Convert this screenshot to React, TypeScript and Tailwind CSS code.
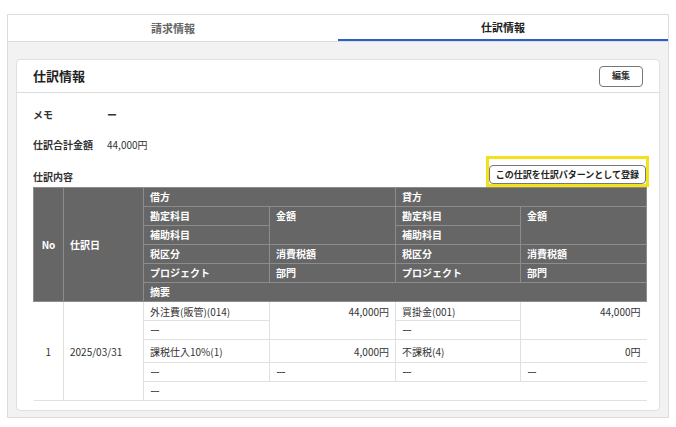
const th = 'bg-[#666666] text-white font-bold text-[10px] border border-[#8c8c8c] px-1.5 text-left align-top h-[19px] leading-[17px]'
const td = 'text-[10px] text-[#333] border-b border-[#e0e0e0] px-1.5 h-[19px] align-middle'

export default function App() {
  return (
    <div className="w-[676px] h-[427px] bg-white pt-[14px] px-[7px]" style={{ fontFamily: '"Noto Sans CJK JP", "Noto Sans", sans-serif' }}>
      <div className="border border-[#dcdcdc] bg-[#f2f2f2] h-[404px] flex flex-col">
        <div className="flex bg-white h-[27px] border-b border-[#dcdcdc]">
          <div className="flex-1 flex items-center justify-center text-[11px] text-[#666] font-bold">請求情報</div>
          <div className="flex-1 flex items-center justify-center text-[11px] text-[#222] font-bold border-b-2 border-[#2b5fc9]">仕訳情報</div>
        </div>
        <div className="mx-2 mt-[17px] bg-white border border-[#e0e0e0] rounded-sm h-[352px]">
          <div className="flex items-center justify-between h-[33px] px-4 border-b border-[#dcdcdc]">
            <div className="text-[13px] font-bold text-[#222]">仕訳情報</div>
            <button className="border border-[#777] rounded px-3 h-[21px] text-[9px] font-bold text-[#333]">編集</button>
          </div>
          <div className="px-4">
            <div className="flex items-center h-[18px] mt-[12px] text-[10px] text-[#333] font-bold">
              <span className="w-[74px]">メモ</span><span>ー</span>
            </div>
            <div className="flex items-center h-[18px] mt-[12px] text-[10px] text-[#333]">
              <span className="w-[74px] font-bold">仕訳合計金額</span><span>44,000円</span>
            </div>
            <div className="flex items-end justify-between mt-[6px] h-[28px]">
              <span className="text-[10px] font-bold text-[#333] mb-[3px]">仕訳内容</span>
              <div className="border-[3px] border-[#f2e21a] mr-[-6px]">
                <button className="border border-[#777] rounded bg-white px-1.5 h-[19px] text-[9px] font-bold text-[#222]">この仕訳を仕訳パターンとして登録</button>
              </div>
            </div>
            <table className="w-[613px] border-collapse table-fixed">
              <colgroup>
                <col className="w-[30px]" /><col className="w-[80px]" /><col className="w-[126px]" /><col className="w-[126px]" /><col className="w-[125px]" /><col className="w-[126px]" />
              </colgroup>
              <thead>
                <tr>
                  <th rowSpan={6} className={th + ' !align-middle !text-center'}>No</th>
                  <th rowSpan={6} className={th + ' !align-middle'}>仕訳日</th>
                  <th colSpan={2} className={th}>借方</th>
                  <th colSpan={2} className={th}>貸方</th>
                </tr>
                <tr><th className={th}>勘定科目</th><th rowSpan={2} className={th}>金額</th><th className={th}>勘定科目</th><th rowSpan={2} className={th}>金額</th></tr>
                <tr><th className={th}>補助科目</th><th className={th}>補助科目</th></tr>
                <tr><th className={th}>税区分</th><th className={th}>消費税額</th><th className={th}>税区分</th><th className={th}>消費税額</th></tr>
                <tr><th className={th}>プロジェクト</th><th className={th}>部門</th><th className={th}>プロジェクト</th><th className={th}>部門</th></tr>
                <tr><th colSpan={4} className={th}>摘要</th></tr>
              </thead>
              <tbody>
                <tr>
                  <td rowSpan={5} className={td + ' text-center border-r'}>1</td>
                  <td rowSpan={5} className={td + ' border-r'}>2025/03/31</td>
                  <td className={td + ' border-r'}>外注費(販管)(014)</td>
                  <td rowSpan={2} className={td + ' text-right align-top pt-0.5 border-r'}>44,000円</td>
                  <td className={td + ' border-r'}>買掛金(001)</td>
                  <td rowSpan={2} className={td + ' text-right align-top pt-0.5'}>44,000円</td>
                </tr>
                <tr><td className={td + ' border-r'}>ー</td><td className={td + ' border-r'}>ー</td></tr>
                <tr className="h-[23px]"><td className={td + ' border-r'}>課税仕入10%(1)</td><td className={td + ' text-right border-r'}>4,000円</td><td className={td + ' border-r'}>不課税(4)</td><td className={td + ' text-right'}>0円</td></tr>
                <tr><td className={td + ' border-r'}>ー</td><td className={td + ' border-r'}>ー</td><td className={td + ' border-r'}>ー</td><td className={td}>ー</td></tr>
                <tr><td colSpan={4} className={td}>ー</td></tr>
              </tbody>
            </table>
          </div>
        </div>
      </div>
    </div>
  )
}
